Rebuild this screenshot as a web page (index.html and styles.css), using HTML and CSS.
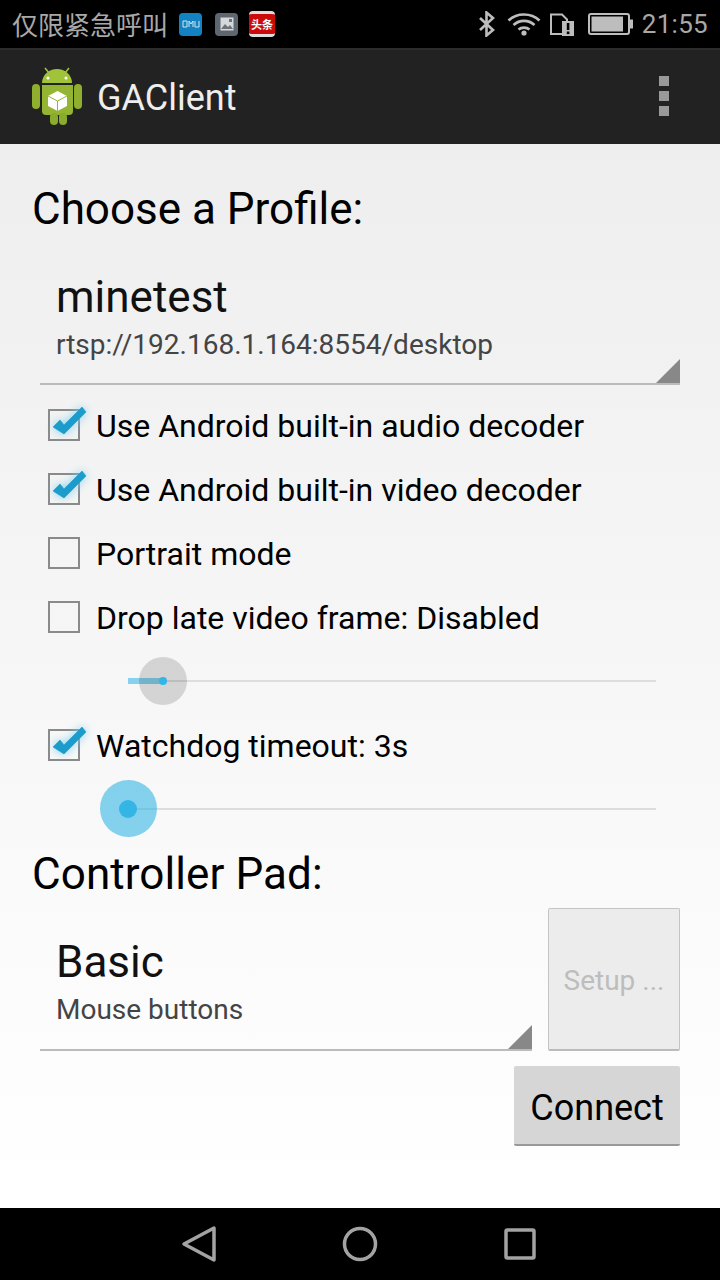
FILE: index.html
```html
<!DOCTYPE html>
<html lang="en">
<head>
  <meta charset="UTF-8" />
  <title>GAClient</title>
  <link rel="stylesheet" href="styles.css">
</head>
<body>
  <div class="status-bar">
    <span class="status-text">仅限紧急呼叫</span>
    <span class="notif notif-blue">
      <svg width="18" height="8" viewBox="0 0 18 8"><path d="M1 1h4v6H1zM7 7V1l2 3 2-3v6M13 1v6h4V1" fill="none" stroke="#cfe6f3" stroke-width="1"/></svg>
    </span>
    <span class="notif notif-grey">
      <svg width="14" height="14" viewBox="0 0 14 14"><rect x="0.5" y="0.5" width="13" height="13" fill="#d5d8db"/><path d="M1 12l4-5 3 3 2-2 3 4z" fill="#6a737c"/><rect x="9" y="2" width="3" height="3" fill="#6a737c"/></svg>
    </span>
    <span class="notif notif-news"><span class="notif-news-label">头条</span></span>
    <span class="status-spacer"></span>
    <svg class="status-bt" width="20" height="26" viewBox="0 0 20 26"><path d="M3 7l13 12-6.500 5.500V1.500L16 7 3 19" fill="none" stroke="#bdbdbd" stroke-width="2.600"/></svg>
    <svg class="status-wifi" width="34" height="24" viewBox="0 0 34 24"><g fill="none" stroke="#bdbdbd" stroke-width="2.600"><path d="M1.500 8.500C10 .5 24 .5 32.500 8.500"/><path d="M6.500 13c6-5.500 15-5.500 21 0"/><path d="M11.500 17.500c3-2.500 8-2.500 11 0"/></g><circle cx="17" cy="21" r="2.600" fill="#bdbdbd"/></svg>
    <svg class="status-sim" width="24" height="24" viewBox="0 0 24 24"><path d="M1 2.500h11l5 5V22H1z" fill="none" stroke="#bdbdbd" stroke-width="2"/><rect x="12" y="9" width="12" height="15" fill="#bdbdbd"/><rect x="16.800" y="11" width="2.600" height="7" fill="#000"/><rect x="16.800" y="19.500" width="2.600" height="2.600" fill="#000"/></svg>
    <svg class="status-battery" width="45" height="22" viewBox="0 0 45 22"><rect x="1" y="1" width="40" height="20" rx="2" fill="none" stroke="#bdbdbd" stroke-width="2"/><rect x="3.500" y="3.500" width="31.500" height="15" fill="#bdbdbd"/><rect x="42" y="6.500" width="3" height="9" fill="#bdbdbd"/></svg>
    <span class="status-clock">21:55</span>
  </div>

  <div class="action-bar">
    <svg class="app-icon" width="50" height="60" viewBox="0 0 50 60">
      <path d="M13 1l4 5M37 1l-4 5" stroke="#a4c639" stroke-width="1.500"/>
      <rect x="0" y="17" width="8" height="25" rx="4" fill="#8fb02e"/>
      <rect x="42" y="17" width="8" height="25" rx="4" fill="#8fb02e"/>
      <path d="M10 16C10 8 17 2 25 2s15 6 15 14z" fill="#a0c33a"/>
      <path d="M10 18h31v26a4 4 0 0 1-4 4H14a4 4 0 0 1-4-4z" fill="#93b531"/>
      <rect x="18" y="46" width="8" height="12" rx="4" fill="#8aab2c"/>
      <rect x="27" y="46" width="8" height="12" rx="4" fill="#8aab2c"/>
      <circle cx="16" cy="11" r="1.500" fill="#fff"/>
      <circle cx="34" cy="11" r="1.500" fill="#fff"/>
      <path d="M25.500 24l9.500 5v10l-9.500 5-9.500-5V29z" fill="#fff"/>
      <path d="M16 29l9.500 5 9.500-5M25.500 34v10" fill="none" stroke="#93b531" stroke-width="1"/>
    </svg>
    <span class="app-title">GAClient</span>
    <span class="overflow"><i></i><i></i><i></i></span>
  </div>

  <div class="content">
    <div class="heading">Choose a Profile:</div>

    <div class="spinner spinner-profile">
      <div class="spinner-title">minetest</div>
      <div class="spinner-sub">rtsp://192.168.1.164:8554/desktop</div>
    </div>

    <div class="check-list">
      <div class="check-row">
        <span class="check-box"><svg class="tick" width="38" height="34" viewBox="0 0 38 34"><path d="M3 23l7-7 4 5L32 3l4 5-22 22z"/></svg></span>
        <span class="check-label">Use Android built-in audio decoder</span>
      </div>
      <div class="check-row">
        <span class="check-box"><svg class="tick" width="38" height="34" viewBox="0 0 38 34"><path d="M3 23l7-7 4 5L32 3l4 5-22 22z"/></svg></span>
        <span class="check-label">Use Android built-in video decoder</span>
      </div>
      <div class="check-row">
        <span class="check-box"></span>
        <span class="check-label">Portrait mode</span>
      </div>
      <div class="check-row">
        <span class="check-box"></span>
        <span class="check-label">Drop late video frame: Disabled</span>
      </div>
      <div class="slider slider-drop">
        <span class="slider-track"></span>
        <span class="slider-fill"></span>
        <span class="slider-halo"><span class="slider-dot"></span></span>
      </div>
      <div class="check-row">
        <span class="check-box"><svg class="tick" width="38" height="34" viewBox="0 0 38 34"><path d="M3 23l7-7 4 5L32 3l4 5-22 22z"/></svg></span>
        <span class="check-label">Watchdog timeout: 3s</span>
      </div>
      <div class="slider slider-watchdog">
        <span class="slider-track"></span>
        <span class="slider-halo"><span class="slider-dot"></span></span>
      </div>
    </div>

    <div class="heading heading-pad">Controller Pad:</div>

    <div class="pad-row">
      <div class="spinner spinner-pad">
        <div class="spinner-title">Basic</div>
        <div class="spinner-sub">Mouse buttons</div>
      </div>
      <button class="btn btn-setup" disabled>Setup ...</button>
    </div>

    <div class="connect-row">
      <button class="btn btn-connect">Connect</button>
    </div>
  </div>

  <div class="nav-bar">
    <svg width="36" height="38" viewBox="0 0 36 38"><path d="M33 3v32L3 19z" fill="none" stroke="#a3a3a3" stroke-width="3.500" stroke-linejoin="round"/></svg>
    <svg width="36" height="36" viewBox="0 0 36 36"><circle cx="18" cy="18" r="15.500" fill="none" stroke="#a3a3a3" stroke-width="3.500"/></svg>
    <svg width="34" height="34" viewBox="0 0 34 34"><rect x="3" y="3" width="28" height="28" rx="1.500" fill="none" stroke="#a3a3a3" stroke-width="3.500"/></svg>
  </div>
</body>
</html>
```

FILE: styles.css
```css
* {
  box-sizing: border-box;
}

html, body {
  margin: 0;
  padding: 0;
}

body {
  width: 720px;
  height: 1280px;
  overflow: hidden;
  font-family: Roboto, 'Noto Sans CJK SC', sans-serif;
  background: #fff;
  color: #000;
}

/* status bar */
.status-bar {
  height: 48px;
  background: #000;
  display: flex;
  align-items: center;
  padding: 0 12px;
  color: #a8a8a8;
}

.status-text {
  font-family: 'Noto Sans CJK SC', sans-serif;
  font-size: 26px;
  line-height: 48px;
  width: 167px;
  white-space: nowrap;
}

.notif {
  width: 23px;
  height: 23px;
  border-radius: 4px;
  display: flex;
  align-items: center;
  justify-content: center;
  margin-right: 13px;
  overflow: hidden;
}

.notif-blue {
  background: #1282c2;
}

.notif-grey {
  background: #5e6770;
}

.notif-news {
  width: 26px;
  height: 26px;
  background: #cc0a0a;
  border-top: 3px solid #ddd;
  border-bottom: 3px solid #ddd;
  margin-left: -2px;
}

.notif-news-label {
  font-family: 'Noto Sans CJK SC', sans-serif;
  font-size: 11px;
  font-weight: 700;
  color: #fff;
  line-height: 1;
  white-space: nowrap;
}

.status-spacer {
  flex: 1;
}

.status-bt {
  margin-right: 10px;
}

.status-wifi {
  margin-right: 9px;
}

.status-sim {
  margin-right: 14px;
}

.status-battery {
  margin-right: 9px;
}

.status-clock {
  font-size: 26px;
  line-height: 48px;
  letter-spacing: 0.3px;
}

/* action bar */
.action-bar {
  height: 96px;
  background: #222;
  border-top: 2px solid #2c2c2c;
  display: flex;
  align-items: center;
  padding-left: 32px;
}

.app-icon {
  margin-right: 15px;
}

.app-title {
  font-size: 36px;
  color: #eee;
  flex: 1;
  padding-top: 2px;
}

.overflow {
  width: 10px;
  margin: -2px 51px 0 0;
  display: flex;
  flex-direction: column;
  gap: 5px;
}

.overflow i {
  display: block;
  height: 10px;
  background: #999;
}

/* main area */
.content {
  height: 1064px;
  background: linear-gradient(#eee, #fff);
  padding: 0 40px;
}

.heading {
  font-size: 44px;
  line-height: 64px;
  margin-left: -8px;
  padding-top: 33px;
  height: 96px;
}

.heading-pad {
  padding-top: 0;
  height: 64px;
  letter-spacing: 0.08px;
}

.spinner {
  position: relative;
  border-bottom: 2px solid #bbb;
  padding: 29px 0 0 16px;
}

.spinner::after {
  content: "";
  position: absolute;
  right: 0;
  bottom: 0;
  border-style: solid;
  border-width: 0 0 24px 24px;
  border-color: transparent transparent #888 transparent;
}

.spinner-profile {
  height: 145px;
}

.spinner-title {
  font-size: 44px;
  line-height: 56px;
  color: #111;
}

.spinner-sub {
  font-size: 28px;
  line-height: 40px;
  color: #444;
}

.check-list {
  padding-top: 9px;
}

.check-row {
  height: 64px;
  display: flex;
  align-items: center;
  padding-left: 8px;
}

.check-box {
  position: relative;
  width: 32px;
  height: 32px;
  border: 2px solid #8a8a8a;
  margin: 0 16px 2px 0;
}

.tick {
  position: absolute;
  left: 0;
  top: -7px;
  fill: #1b9ccb;
  stroke: #1b9ccb;
  stroke-width: 0.6;
  filter: drop-shadow(0 0 4px #7fd0ee);
}

.check-label {
  font-size: 32px;
  color: #000;
}

.slider {
  position: relative;
  height: 64px;
}

.slider-track {
  position: absolute;
  left: 88px;
  right: 24px;
  top: 30px;
  height: 2px;
  background: #ddd;
}

.slider-fill {
  position: absolute;
  left: 88px;
  top: 28px;
  width: 34px;
  height: 6px;
  background: #85d1ee;
}

.slider-halo {
  position: absolute;
  border-radius: 50%;
  display: flex;
  align-items: center;
  justify-content: center;
}

.slider-drop .slider-halo {
  left: 99px;
  top: 7px;
  width: 48px;
  height: 48px;
  background: rgba(0, 0, 0, 0.14);
}

.slider-drop .slider-dot {
  width: 8px;
  height: 8px;
  border-radius: 50%;
  background: #33b5e5;
}

.slider-watchdog .slider-halo {
  left: 60px;
  top: 2px;
  width: 57px;
  height: 57px;
  background: rgba(51, 181, 229, 0.6);
}

.slider-watchdog .slider-dot {
  width: 18px;
  height: 18px;
  border-radius: 50%;
  background: #33b5e5;
  margin-right: 1px;
}

.pad-row {
  display: flex;
  gap: 16px;
  margin-top: 2px;
}

.spinner-pad {
  width: 492px;
  height: 143px;
  padding-top: 26px;
}

.btn {
  border: none;
  border-radius: 2px;
  font-family: Roboto, sans-serif;
  padding: 0;
}

.btn-setup {
  width: 132px;
  height: 143px;
  background: #ececec;
  border: 1px solid #c4c4c4;
  border-bottom: 2px solid #bbb;
  color: #bdbdbd;
  font-size: 28px;
  padding-top: 2px;
}

.connect-row {
  display: flex;
  justify-content: flex-end;
  margin-top: 15px;
}

.btn-connect {
  width: 166px;
  height: 80px;
  background: #d6d6d6;
  border-bottom: 2px solid #999;
  color: #000;
  font-size: 36px;
  padding-top: 5px;
}

/* nav bar */
.nav-bar {
  height: 72px;
  background: #000;
  display: flex;
  align-items: center;
  justify-content: center;
  gap: 125px;
  padding-right: 2px;
}
```
